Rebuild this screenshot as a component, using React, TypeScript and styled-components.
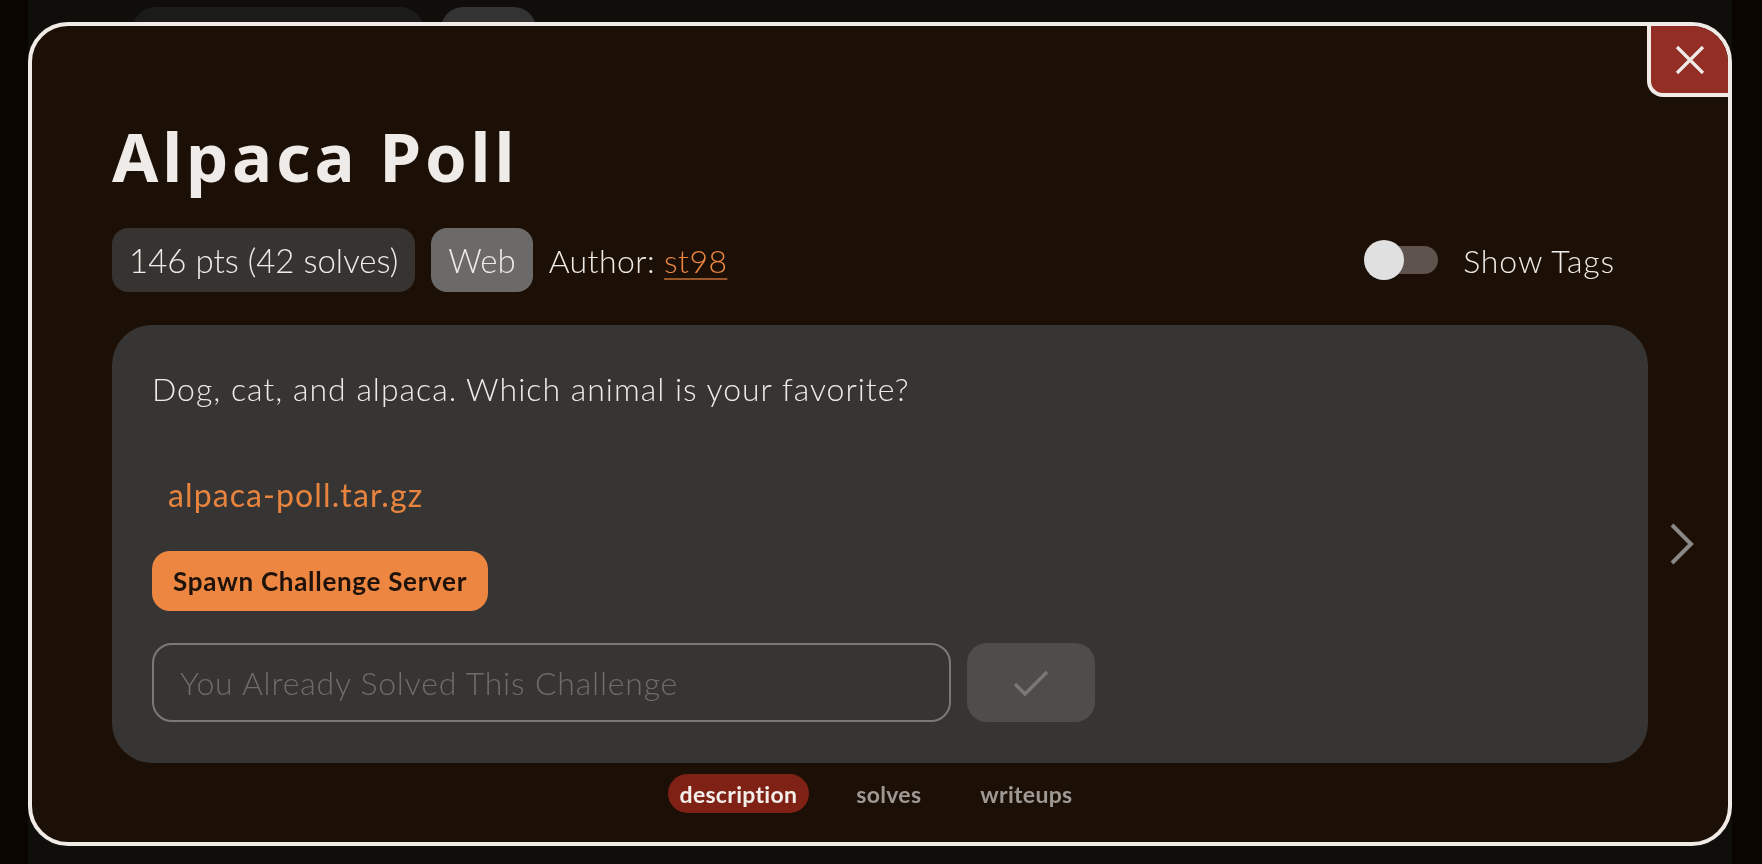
import React from "react";
import styled, { createGlobalStyle } from "styled-components";

const GlobalStyle = createGlobalStyle`
  html, body { margin: 0; padding: 0; }
  body {
    background: #0b0502;
    font-family: Lato, "Noto Sans", "Open Sans", sans-serif;
    overflow: hidden;
  }
  * { box-sizing: border-box; }
`;

const Page = styled.div`
  margin: 0 30px 0 28px;
  height: 864px;
  background: #100e0b;
  padding: 7px 0 0 105px;
  display: flex;
  gap: 18px;
  align-items: flex-start;
`;

const GhostChip = styled.div<{ $w: number; $bg: string }>`
  width: ${(p) => p.$w}px;
  height: 44px;
  border-radius: 22px;
  background: ${(p) => p.$bg};
`;

const Overlay = styled.div`
  position: fixed;
  inset: 0;
  padding: 22px 0 0 28px;
`;

const Modal = styled.div`
  position: relative;
  width: 1704px;
  height: 824px;
  border: 4px solid #f0ebe6;
  border-radius: 40px;
  background: #1c0f05;
  overflow: hidden;
  display: flex;
  flex-direction: column;
  padding-top: 90px;
  color: #efebe8;
`;

const CloseButton = styled.button`
  position: absolute;
  top: 0;
  right: 0;
  width: 81px;
  height: 71px;
  padding: 0;
  border: none;
  border-left: 4px solid #f0ebe6;
  border-bottom: 4px solid #f0ebe6;
  border-bottom-left-radius: 16px;
  background: #922e25;
  display: flex;
  align-items: center;
  justify-content: center;
  cursor: pointer;
`;

const Title = styled.h1`
  margin: 0 80px;
  font-family: "Noto Sans", "Open Sans", sans-serif;
  font-size: 67px;
  line-height: 80px;
  font-weight: 700;
  letter-spacing: 3.8px;
  color: #efebe8;
`;

const MetaRow = styled.div`
  margin: 32px 80px 0;
  padding-right: 33px;
  height: 64px;
  display: flex;
  align-items: center;
  gap: 16px;
`;

const Pill = styled.span<{ $bg: string }>`
  height: 64px;
  padding: 0 17px;
  border-radius: 16px;
  background: ${(p) => p.$bg};
  display: inline-flex;
  align-items: center;
  font-size: 33px;
  font-weight: 300;
  color: #efebe8;
`;

const Author = styled.span`
  font-size: 32px;
  font-weight: 300;
  letter-spacing: 0.4px;
  color: #efebe8;
`;

const AuthorLink = styled.a`
  color: #ec8640;
  text-decoration: underline;
  text-decoration-color: rgba(236, 134, 64, 0.6);
  text-decoration-thickness: 2px;
  text-underline-offset: 5px;
`;

const ToggleWrap = styled.label`
  margin-left: auto;
  display: flex;
  align-items: center;
  gap: 25px;
  font-size: 32px;
  font-weight: 300;
  letter-spacing: 0.9px;
  color: #efebe8;
`;

const Track = styled.span`
  position: relative;
  width: 68px;
  height: 28px;
  margin-left: 6px;
  border-radius: 14px;
  background: #5e544d;
`;

const Knob = styled.span`
  position: absolute;
  left: -6px;
  top: -6px;
  width: 40px;
  height: 40px;
  border-radius: 50%;
  background: #e0e0e0;
`;

const CardRow = styled.div`
  margin-top: 33px;
  display: grid;
  grid-template-columns: 80px 1fr 80px;
`;

const Card = styled.div`
  grid-column: 2;
  background: #373534;
  border-radius: 40px;
  padding: 40px 40px 41px;
  display: flex;
  flex-direction: column;
  align-items: flex-start;
`;

const Description = styled.p`
  margin: 0;
  font-size: 32px;
  line-height: 48px;
  font-weight: 300;
  letter-spacing: 1px;
  color: #efebe8;
`;

const FileList = styled.div`
  margin-top: 58px;
  padding-left: 16px;
`;

const FileLink = styled.a`
  font-size: 32px;
  line-height: 48px;
  font-weight: 400;
  letter-spacing: 1.1px;
  color: #e8843e;
  text-decoration: none;
`;

const SpawnButton = styled.button`
  margin-top: 32px;
  height: 60px;
  padding: 0 21px;
  border: none;
  border-radius: 18px;
  background: #ec8640;
  color: #1e120a;
  font-family: inherit;
  font-size: 26px;
  font-weight: 700;
  letter-spacing: 0.7px;
  cursor: pointer;
`;

const SubmitRow = styled.div`
  margin-top: 32px;
  display: flex;
  gap: 16px;
`;

const FlagInput = styled.input`
  width: 799px;
  height: 79px;
  border: 2px solid #7b7977;
  border-radius: 20px;
  background: transparent;
  padding: 0 0 0 26px;
  font-family: inherit;
  font-size: 32px;
  font-weight: 300;
  letter-spacing: 0.8px;
  color: #efebe8;
  outline: none;
  &::placeholder { color: #6f6c6a; }
`;

const SubmitButton = styled.button`
  width: 128px;
  height: 79px;
  border: none;
  border-radius: 20px;
  background: #4f4d4c;
  display: flex;
  align-items: center;
  justify-content: center;
`;

const NavCell = styled.div`
  grid-column: 3;
  display: flex;
  align-items: center;
  padding-left: 22px;
`;

const Tabs = styled.nav`
  margin-top: 11px;
  padding-right: 8px;
  display: flex;
  justify-content: center;
  gap: 35px;
`;

const Tab = styled.span<{ $active?: boolean }>`
  height: 39px;
  padding: 0 12px;
  border-radius: 20px;
  display: inline-flex;
  align-items: center;
  font-size: 23px;
  font-weight: 700;
  letter-spacing: 0.3px;
  background: ${(p) => (p.$active ? "#7f2115" : "transparent")};
  color: ${(p) => (p.$active ? "#f2eeea" : "#9e9994")};
`;

export default function App() {
  return (
    <>
      <GlobalStyle />
      <Page>
        <GhostChip $w={290} $bg="#1b1b1a" />
        <GhostChip $w={95} $bg="#333333" />
      </Page>
      <Overlay>
        <Modal>
          <CloseButton aria-label="close">
            <svg width="30" height="30" viewBox="0 0 30 30">
              <path d="M2 2 L28 28 M28 2 L2 28" stroke="#f0ebe6" strokeWidth="3.2" strokeLinecap="butt" />
            </svg>
          </CloseButton>
          <Title>Alpaca Poll</Title>
          <MetaRow>
            <Pill $bg="#363330">146 pts (42 solves)</Pill>
            <Pill $bg="#6b6a68">Web</Pill>
            <Author>
              Author: <AuthorLink href="#">st98</AuthorLink>
            </Author>
            <ToggleWrap>
              <Track>
                <Knob />
              </Track>
              Show Tags
            </ToggleWrap>
          </MetaRow>
          <CardRow>
            <Card>
              <Description>Dog, cat, and alpaca. Which animal is your favorite?</Description>
              <FileList>
                <FileLink href="#">alpaca-poll.tar.gz</FileLink>
              </FileList>
              <SpawnButton>Spawn Challenge Server</SpawnButton>
              <SubmitRow>
                <FlagInput placeholder="You Already Solved This Challenge" disabled />
                <SubmitButton aria-label="submit">
                  <svg width="38" height="28" viewBox="0 0 38 28">
                    <path d="M3 15 L13 25 L35 3" fill="none" stroke="#7a7876" strokeWidth="3.5" />
                  </svg>
                </SubmitButton>
              </SubmitRow>
            </Card>
            <NavCell>
              <svg width="24" height="42" viewBox="0 0 24 42">
                <path d="M2 2 L21 21 L2 40" fill="none" stroke="#8a8886" strokeWidth="4" />
              </svg>
            </NavCell>
          </CardRow>
          <Tabs>
            <Tab $active>description</Tab>
            <Tab>solves</Tab>
            <Tab>writeups</Tab>
          </Tabs>
        </Modal>
      </Overlay>
    </>
  );
}
